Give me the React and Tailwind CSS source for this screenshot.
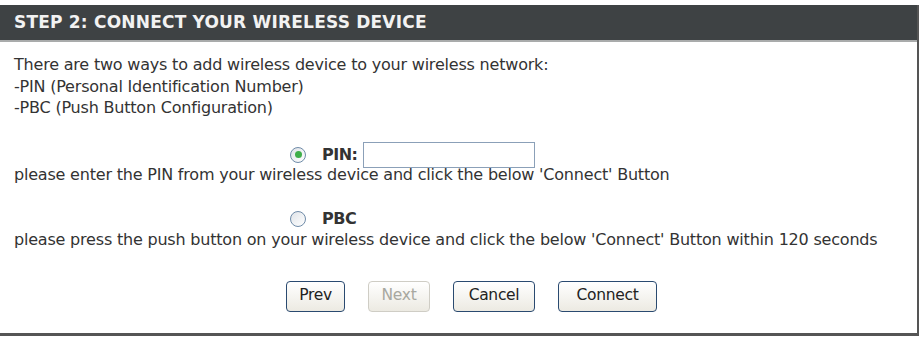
export default function App() {
  return (
    <div className="w-[923px] h-[339px] bg-white pt-[5px] text-[#333]" style={{ fontFamily: '"DejaVu Sans", Tahoma, sans-serif' }}>
      <div className="w-[919px] border-r-2 border-b-[3px] border-[#555] h-[331px] flex flex-col">
        <div className="h-[35px] bg-[#3e4244] flex items-center pl-[14px] text-[#f2f2f2] font-bold text-[17px] tracking-[0.2px]">
          STEP 2: CONNECT YOUR WIRELESS DEVICE
        </div>
        <div className="h-[2px] bg-[#a9abab]" />
        <div className="pl-[14px] pt-[12px] text-[16px] leading-[21.5px] tracking-[-0.2px]">
          <p>There are two ways to add wireless device to your wireless network:</p>
          <p>-PIN (Personal Identification Number)</p>
          <p>-PBC (Push Button Configuration)</p>

          <div className="flex items-center pl-[276px] mt-[23px] h-[26px]">
            <Radio checked />
            <span className="ml-[16px] font-bold tracking-[-0.5px]">PIN:</span>
            <input className="ml-[6px] w-[172px] h-[26px] border border-[#8ba0b8] outline-none" />
          </div>
          <p className="mt-[-4px]">please enter the PIN from your wireless device and click the below 'Connect' Button</p>

          <div className="flex items-center pl-[276px] mt-[24px] h-[20px]">
            <Radio />
            <span className="ml-[16px] font-bold tracking-[-0.5px]">PBC</span>
          </div>
          <p>please press the push button on your wireless device and click the below 'Connect' Button within 120 seconds</p>

          <div className="flex items-center pl-[272px] mt-[30px] gap-[23px]">
            <Btn w="w-[59px]">Prev</Btn>
            <Btn w="w-[62px]" disabled>Next</Btn>
            <Btn w="w-[82px]">Cancel</Btn>
            <Btn w="w-[99px]">Connect</Btn>
          </div>
        </div>
      </div>
    </div>
  )
}

function Radio({ checked }) {
  return (
    <span className="w-[16px] h-[16px] rounded-full border border-[#6f8ba8] bg-gradient-to-br from-[#dfe3e8] to-white flex items-center justify-center">
      {checked && <span className="w-[7px] h-[7px] rounded-full bg-[#3fae4a]" />}
    </span>
  )
}

function Btn({ children, w, disabled }) {
  return (
    <button
      disabled={disabled}
      className={
        w +
        ' h-[31px] rounded-[4px] text-[15.5px] tracking-[-0.3px] bg-gradient-to-b from-white to-[#eceae2] ' +
        (disabled ? 'border border-[#cfcdc5] text-[#a8a8a0]' : 'border border-[#2a4a70] text-[#222]')
      }
    >
      {children}
    </button>
  )
}
